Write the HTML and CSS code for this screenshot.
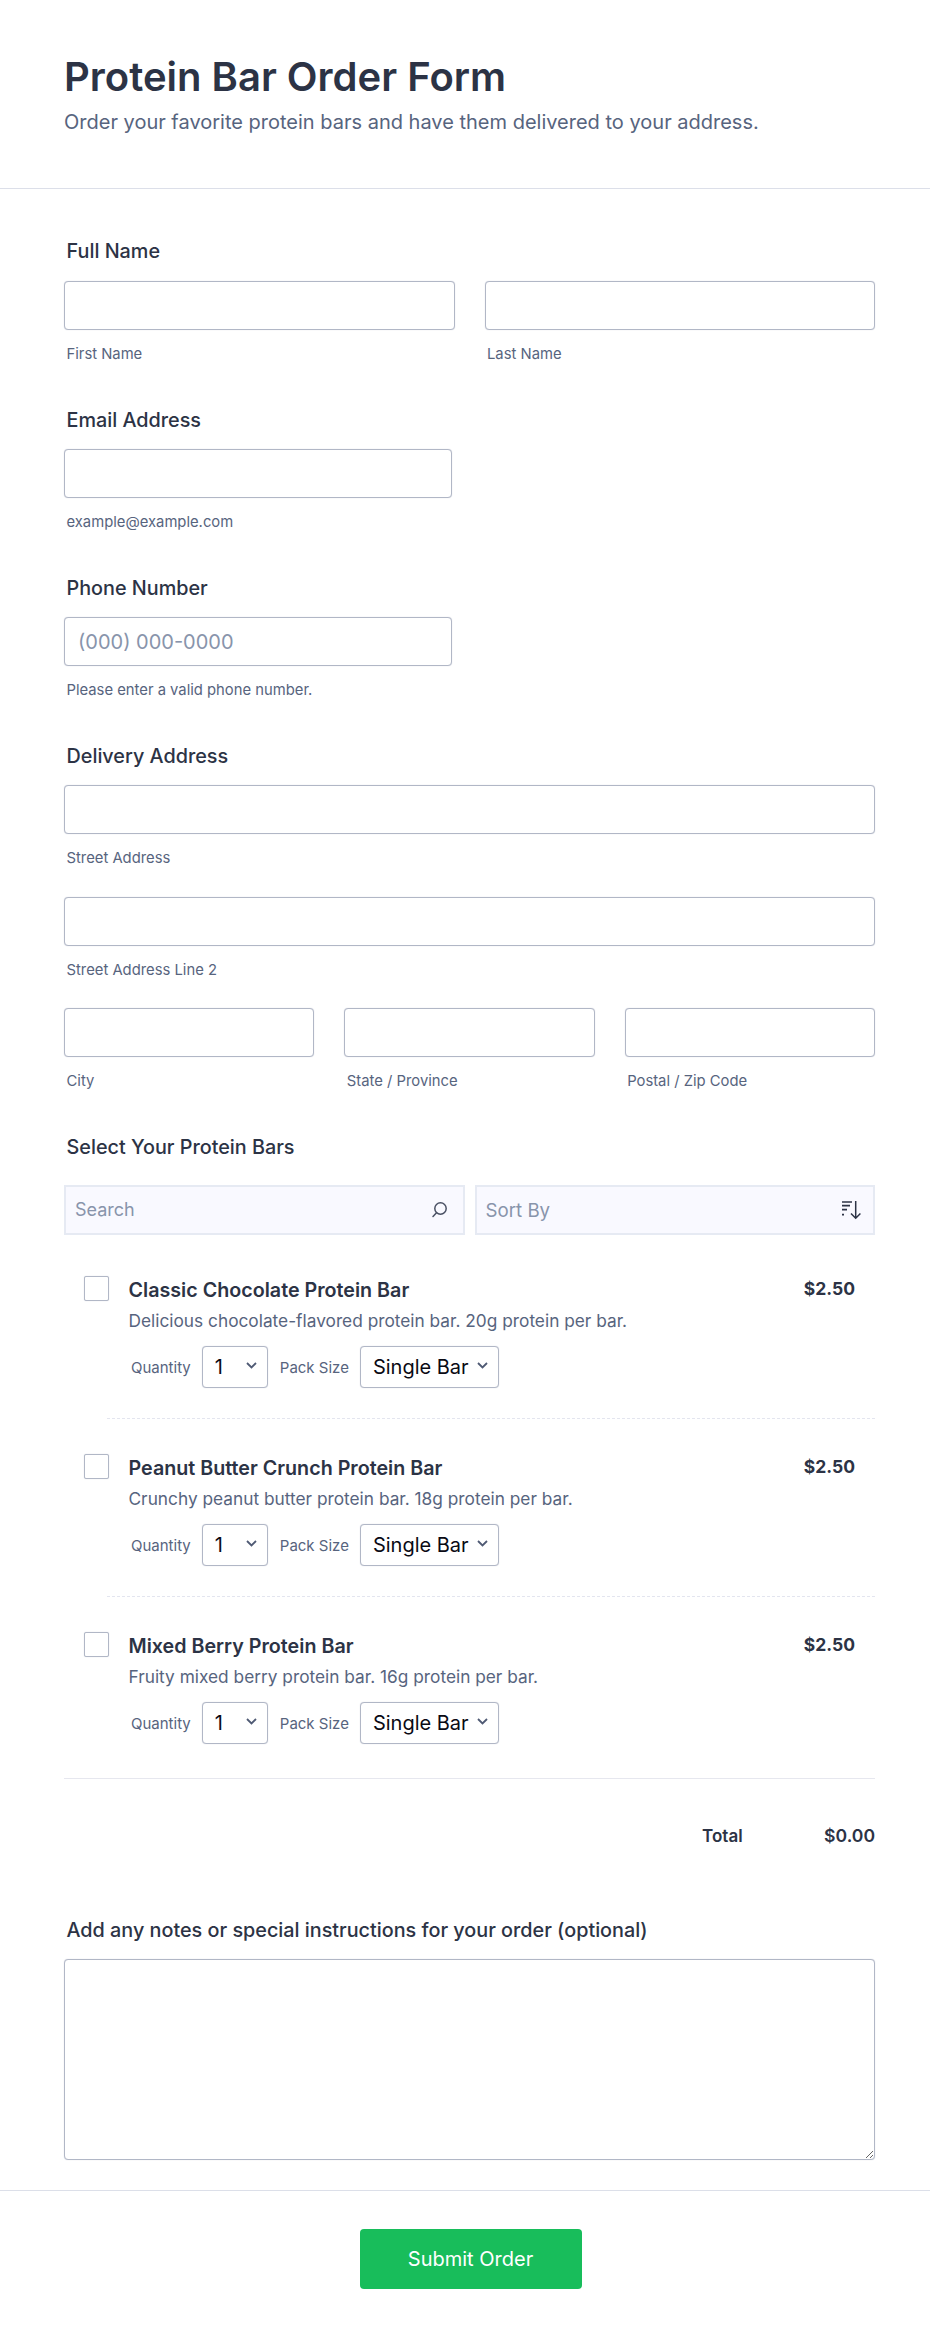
FILE: index.html
```html
<!DOCTYPE html>
<html lang="en">
<head>
<meta charset="utf-8">
<title>Protein Bar Order Form</title>
<link rel="stylesheet" href="styles.css">
</head>
<body>
<form class="form">
  <header class="head">
    <h1 class="title">Protein Bar Order Form</h1>
    <p class="subtitle">Order your favorite protein bars and have them delivered to your address.</p>
  </header>
  <div class="body">
    <section class="field">
      <div class="label">Full Name</div>
      <div class="row two">
        <div class="cell"><input class="input" type="text"><div class="sub">First Name</div></div>
        <div class="cell"><input class="input" type="text"><div class="sub">Last Name</div></div>
      </div>
    </section>
    <section class="field">
      <div class="label">Email Address</div>
      <div class="cell half"><input class="input" type="email"><div class="sub">example@example.com</div></div>
    </section>
    <section class="field">
      <div class="label">Phone Number</div>
      <div class="cell half"><input class="input" type="tel" placeholder="(000) 000-0000"><div class="sub">Please enter a valid phone number.</div></div>
    </section>
    <section class="field">
      <div class="label">Delivery Address</div>
      <div class="stack">
        <div class="cell"><input class="input" type="text"><div class="sub">Street Address</div></div>
        <div class="cell"><input class="input" type="text"><div class="sub">Street Address Line 2</div></div>
        <div class="row three">
          <div class="cell"><input class="input" type="text"><div class="sub">City</div></div>
          <div class="cell"><input class="input" type="text"><div class="sub">State / Province</div></div>
          <div class="cell"><input class="input" type="text"><div class="sub">Postal / Zip Code</div></div>
        </div>
      </div>
    </section>
    <section class="field products">
      <div class="label">Select Your Protein Bars</div>
      <div class="tools">
        <div class="tool"><span class="tool-text search-text">Search</span>
          <svg class="icon icon-search" width="18" height="18" viewBox="0 0 18 18" fill="none" stroke="#4a5164" stroke-width="1.500" stroke-linecap="round"><circle cx="10.500" cy="7.500" r="5.700"/><path d="M6.500 11.700 3 15.500"/></svg>
        </div>
        <div class="tool"><span class="tool-text">Sort By</span>
          <svg class="icon" width="22" height="20" viewBox="0 0 22 20" fill="none" stroke="#2c3345" stroke-width="1.700"><path d="M2 2h10M2 5.700h8M2 9.700h5M2 14.700h2"/><path d="M15.700 1v17M11 13.500l4.700 4.700 4.700-4.700" stroke-width="1.500"/></svg>
        </div>
      </div>
      <div class="items">
        <article class="item">
          <span class="check"></span>
          <div class="item-main">
            <div class="item-top"><h3 class="item-name">Classic Chocolate Protein Bar</h3><span class="price">$2.50</span></div>
            <p class="item-desc">Delicious chocolate-flavored protein bar. 20g protein per bar.</p>
            <div class="opts">
              <span class="opt-label">Quantity</span>
              <span class="sel"><select class="select qty"><option>1</option><option>2</option></select><svg class="chev" width="11" height="7" viewBox="0 0 11 7" fill="none" stroke="#4f5a74" stroke-width="1.800"><path d="M1 1l4.500 4.500L10 1"/></svg></span>
              <span class="opt-label">Pack Size</span>
              <span class="sel"><select class="select pack"><option>Single Bar</option></select><svg class="chev" width="11" height="7" viewBox="0 0 11 7" fill="none" stroke="#4f5a74" stroke-width="1.800"><path d="M1 1l4.500 4.500L10 1"/></svg></span>
            </div>
          </div>
        </article>
        <article class="item">
          <span class="check"></span>
          <div class="item-main">
            <div class="item-top"><h3 class="item-name">Peanut Butter Crunch Protein Bar</h3><span class="price">$2.50</span></div>
            <p class="item-desc">Crunchy peanut butter protein bar. 18g protein per bar.</p>
            <div class="opts">
              <span class="opt-label">Quantity</span>
              <span class="sel"><select class="select qty"><option>1</option><option>2</option></select><svg class="chev" width="11" height="7" viewBox="0 0 11 7" fill="none" stroke="#4f5a74" stroke-width="1.800"><path d="M1 1l4.500 4.500L10 1"/></svg></span>
              <span class="opt-label">Pack Size</span>
              <span class="sel"><select class="select pack"><option>Single Bar</option></select><svg class="chev" width="11" height="7" viewBox="0 0 11 7" fill="none" stroke="#4f5a74" stroke-width="1.800"><path d="M1 1l4.500 4.500L10 1"/></svg></span>
            </div>
          </div>
        </article>
        <article class="item">
          <span class="check"></span>
          <div class="item-main">
            <div class="item-top"><h3 class="item-name">Mixed Berry Protein Bar</h3><span class="price">$2.50</span></div>
            <p class="item-desc">Fruity mixed berry protein bar. 16g protein per bar.</p>
            <div class="opts">
              <span class="opt-label">Quantity</span>
              <span class="sel"><select class="select qty"><option>1</option><option>2</option></select><svg class="chev" width="11" height="7" viewBox="0 0 11 7" fill="none" stroke="#4f5a74" stroke-width="1.800"><path d="M1 1l4.500 4.500L10 1"/></svg></span>
              <span class="opt-label">Pack Size</span>
              <span class="sel"><select class="select pack"><option>Single Bar</option></select><svg class="chev" width="11" height="7" viewBox="0 0 11 7" fill="none" stroke="#4f5a74" stroke-width="1.800"><path d="M1 1l4.500 4.500L10 1"/></svg></span>
            </div>
          </div>
        </article>
      </div>
      <div class="total"><span class="total-label">Total</span><span class="total-value">$0.00</span></div>
    </section>
    <section class="field notes">
      <div class="label">Add any notes or special instructions for your order (optional)</div>
      <textarea class="area"></textarea>
    </section>
  </div>
  <footer class="foot"><button class="submit" type="button">Submit Order</button></footer>
</form>
</body>
</html>
```
FILE: styles.css
```css
* { box-sizing: border-box; }
html, body { margin: 0; padding: 0; background: #fff; }
body { font-family: Inter, "Liberation Sans", sans-serif; color: #2c3345; }
.form { width: 930px; min-height: 2337px; display: flex; flex-direction: column; }
.head { height: 189px; padding: 53px 64px 0; border-bottom: 1px solid #dcdfe9; }
.title { margin: 0; font-size: 40px; line-height: 48px; font-weight: 600; color: #2c3345; }
.subtitle { margin: 8px 0 0; font-size: 20px; line-height: 26px; color: #57647e; }
.body { padding: 50px 55px 0 64px; display: flex; flex-direction: column; gap: 44px; }
.label { height: 24px; line-height: 24px; font-size: 19.800px; font-weight: 500; color: #2c3345; padding-left: 2.500px; margin-bottom: 17px; }
.field:first-child .label { margin-bottom: 18px; }
.row { display: grid; }
.two { grid-template-columns: 1fr 1fr; column-gap: 30px; }
.three { grid-template-columns: 1fr 1fr 1fr; column-gap: 30px; }
.stack { display: flex; flex-direction: column; gap: 28.500px; }
.half { width: 388px; }
.input { display: block; width: 100%; height: 49px; padding: 0 13px; border: 1px solid #b1b7c6; border-radius: 4px; background: #fff; box-shadow: 0 0 1px #c5c9d6; font: 20px Inter, sans-serif; color: #2c3345; }
.input::placeholder { color: #8894ab; opacity: 1; }
.sub { margin-top: 14px; padding-left: 2.500px; height: 20px; line-height: 20px; font-size: 14.800px; color: #57647e; }
.products .label { margin-bottom: 26px; }
.tools { display: flex; gap: 10px; }
.tool { flex: 1; height: 50px; display: flex; align-items: center; justify-content: space-between; padding: 0 11px 0 9px; background: #f9f9ff; border: 2px solid #e6eaf3; }
.tool-text { font-size: 18.700px; color: #8894ab; }
.search-text { font-size: 18px; position: relative; top: -1px; }
.icon { display: block; flex: none; }
.icon-search { margin-right: 4px; }
.items { border-bottom: 1px solid #e6e7ef; margin-top: 0; }
.item { display: flex; padding: 41px 20px 0 20px; height: 178px; position: relative; }
.item:last-child { height: 186.500px; }
.item + .item::before { content: ""; position: absolute; left: 43px; right: 0; top: 5px; border-top: 1px dashed #e3e5ef; }
.check { flex: none; width: 25px; height: 25px; border: 1px solid #b1b7c6; border-radius: 2px; background: #fff; box-shadow: 0 0 1px #c5c9d6; margin-right: 19.500px; }
.item-main { flex: 1; min-width: 0; padding-top: 1px; }
.item-top { display: flex; justify-content: space-between; align-items: flex-start; height: 26px; }
.item-name { margin: 0; font-size: 19.700px; line-height: 26px; font-weight: 600; color: #2c3345; }
.price { font-size: 17.500px; line-height: 24px; font-weight: 700; color: #2c3345; }
.item-desc { margin: 5.500px 0 0; font-size: 17.300px; line-height: 24px; color: #57647e; }
.opts { display: flex; align-items: center; gap: 11px; margin-top: 13px; padding-left: 2.500px; }
.opt-label { font-size: 15px; color: #57647e; padding-top: 2px; }
.opt-label + .sel + .opt-label { margin-left: 1px; }
.sel { position: relative; display: block; flex: none; }
.chev { position: absolute; right: 11px; top: 16px; pointer-events: none; }
.select { display: block; appearance: none; -webkit-appearance: none; height: 42px; border: 1px solid #b1b7c6; border-radius: 4px; background: #fff; box-shadow: 0 0 1px #c5c9d6; font: 20px Inter, sans-serif; color: #0a0a14; padding: 0 0 0 12px; }
.qty { width: 66px; }
.pack { width: 139px; }
.total { display: flex; justify-content: flex-end; align-items: center; height: 76px; margin-top: 19px; margin-bottom: 0; }
.total-label { width: 122px; font-size: 17px; font-weight: 600; color: #2c3345; }
.total-value { font-size: 17.600px; font-weight: 600; color: #2c3345; }
.area { display: block; width: 100%; height: 201px; border: 1px solid #b1b7c6; border-radius: 4px; background: #fff; box-shadow: 0 0 1px #c5c9d6; }
.foot { margin-top: 30px; border-top: 1px solid #dcdfe9; display: flex; justify-content: center; padding: 38px 0 0 11px; }
.submit { width: 222px; height: 60px; border: 0; border-radius: 4px; background: #18bd5b; color: #fff; font: 400 20px Inter, sans-serif; }
```
